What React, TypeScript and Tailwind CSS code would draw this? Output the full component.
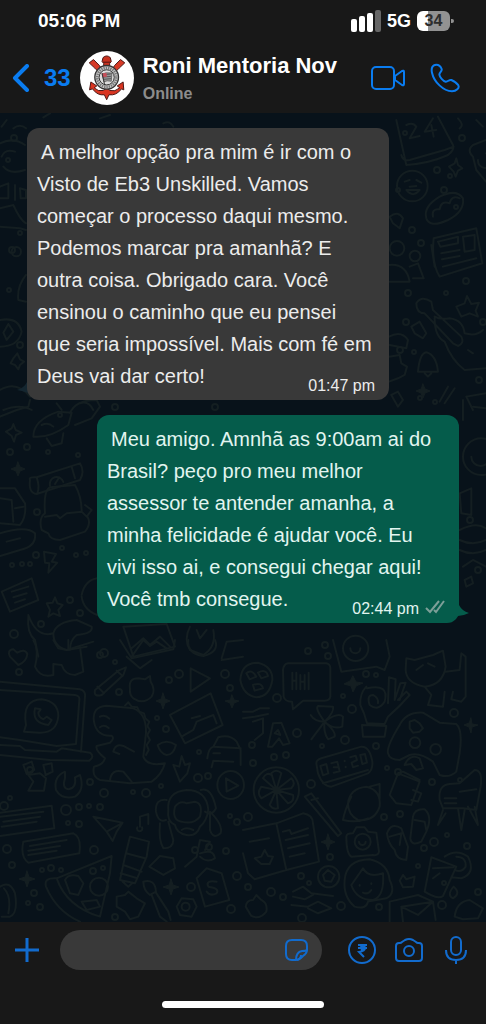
import React from "react";

const BLUE = "#0a7cf0";

type Message = {
  id: number;
  text: string;
  time: string;
  sent: boolean;
};

const messages: Message[] = [
  {
    id: 1,
    text: "A melhor opção pra mim é ir com o Visto de Eb3 Unskilled. Vamos começar o processo daqui mesmo. Podemos marcar pra amanhã? E outra coisa. Obrigado cara. Você ensinou o caminho que eu pensei que seria impossível. Mais com fé em Deus vai dar certo!",
    time: "01:47 pm",
    sent: false,
  },
  {
    id: 2,
    text: "Meu amigo. Amnhã as 9:00am ai do Brasil? peço pro meu melhor assessor te antender amanha, a minha felicidade é ajudar você. Eu vivi isso ai, e consegui chegar aqui! Você tmb consegue.",
    time: "02:44 pm",
    sent: true,
  },
];

// Each block of doodles is drawn at 3x and placed by its own origin
const doodles = [
  {
    x: 0,
    y: 640,
    paths: [
      // laptop
      "M0 125L240 148Q257 152 255 170L243 335M0 150L225 165Q240 167 238 180L228 312 170 318 60 300 0 292M0 315L60 318 75 330 170 335 185 325 270 338Q285 350 268 362L150 360 0 345",
      "M78 255Q65 180 125 178Q175 185 175 228Q170 280 118 278L72 275ZM105 205Q95 250 145 255L155 240 140 230 130 238Q115 230 115 218L122 208Z",
      // dinosaur
      "M335 287Q290 290 282 245Q275 200 320 197L400 205Q440 220 438 280L430 350Q440 380 495 370Q485 405 455 425L390 430 300 420Q275 410 282 380Q310 375 315 355Q285 330 290 318L330 308Q345 295 335 287ZM340 335Q345 310 370 318L402 335M340 335L358 342M330 420Q335 385 370 395L395 425M300 230Q315 222 328 236M300 262Q312 252 326 264",
      "M375 197L385 187 395 200 412 202 418 215 432 220 436 235 448 245 442 258 450 270 442 285 450 300 440 315 446 330 438 345",
      // pencil, apple, play
      "M285 150L355 92 378 82 370 105 305 165Q280 172 285 150ZM350 92L368 108M292 140L312 160",
      "M390 145Q385 115 415 115L435 118 450 108 452 125Q468 150 455 170Q430 195 400 175Q388 165 390 145Z",
      "M572 85L630 115 572 155Z",
      // picture
      "M510 225L632 160 668 255 555 310ZM545 290L580 270 590 245 640 225 650 250M575 235L600 228",
      // car
      "M622 355Q625 325 640 320L655 292Q690 282 710 305L722 330V375M640 320L722 325M635 382L640 362 700 365M640 340H660",
      "M652 435a40 42 0 1 0 80 0a40 42 0 1 0 -80 0M678 415L715 437 680 455Z",
      // monkey
      "M505 510Q500 455 560 450Q620 450 625 510Q620 545 600 560Q590 590 560 585Q530 580 525 555Q500 545 505 510ZM560 490Q540 480 525 500Q515 540 545 545Q580 555 600 530Q610 490 585 485ZM500 480Q465 475 468 515Q475 550 498 540M602 450Q635 440 648 505Q635 530 615 515M480 550Q475 600 490 625Q520 625 520 600L505 545M630 515Q670 555 662 580Q640 600 630 570ZM545 570Q560 560 580 570",
      // books
      "M0 518L155 497 163 565 0 588M0 530L130 515M10 545L120 530M5 560L110 545M70 605L220 580Q245 590 238 640L85 668Q60 650 70 605ZM90 618L200 600M85 632L180 618M85 645L170 632",
      // clip, bow
      "M195 395Q160 410 168 450Q185 480 225 470Q255 450 240 405L225 412Q230 445 205 448Q185 445 195 415Z",
      "M70 375L95 365 103 390 80 402ZM130 375L155 370 158 395 137 405ZM85 405L100 425 85 452H132L138 415 120 400Z",
      // paper plane and note
      "M280 530L368 548 350 575 338 603 320 575ZM320 575L365 550M420 560V530L445 522V552M412 562a8 8 0 1 0 14 0",
      // battery, pizza
      "M390 590L447 605 440 650 405 730 360 720 375 650ZM378 640L435 655M370 675L425 695M362 700L412 715M368 725L385 740 398 728",
      "M170 715L335 648 330 700 300 830Q200 800 170 715ZM170 715Q130 712 138 740Q170 815 240 845M195 720Q205 700 235 708L250 730 235 765 210 760ZM270 740a27 27 0 1 0 54 0a27 27 0 1 0 -54 0M245 785L290 780 300 800 260 810Z",
      "M448 680L480 648 520 655 525 685 490 705Z",
      "M350 770L375 765 385 755 410 775 435 790 415 830 390 838 375 815 350 800Z",
      "M430 725Q465 715 468 755L450 765Q430 750 430 725ZM455 765L480 830 500 845M468 758L505 815 512 840",
      "M545 775L580 778 590 800 575 830 540 825 530 800ZM545 800a12 12 0 1 0 24 0a12 12 0 1 0 -24 0",
      "M590 715L620 685 665 700 688 780 615 800ZM650 725Q615 720 625 740Q660 745 650 760Q630 770 620 755",
      "M545 348L555 375 570 370 562 400 540 425 520 375 538 380ZM473 315Q500 295 528 315Q520 345 500 345Q480 340 473 315Z",
      "M0 740Q30 720 45 760Q55 820 30 830H5M12 745Q35 770 25 820",
      "M555 680L590 650 600 600M600 600L630 605 615 630M600 640Q640 625 645 655Q620 670 600 650",
      "M30 50Q20 30 40 28L52 38Q75 25 82 42Q80 65 55 75Z",
      "M100 0Q118 30 105 80Q120 115 160 105V72L185 75Q195 105 225 105L250 95 240 20M160 0L175 25 200 30 280 5M205 30V0",
      "M360 0L395 55 520 28 525 0M395 50L430 0 450 18 470 5 500 25M380 50L420 85 455 60M565 0Q560 40 610 48Q660 35 645 0M665 55L680 5 729 0M665 60L729 50",
    ],
  },
  {
    x: 243,
    y: 640,
    paths: [
      "M-8 120Q-5 68 45 68Q90 80 88 120Q80 170 40 172Q0 165 -8 120ZM10 100Q25 85 40 110L20 118ZM45 98Q70 85 75 108L55 115ZM30 135Q55 125 60 145L35 152Z",
      // chat balloon
      "M135 70H250Q262 72 262 85V170Q260 182 245 182H180L150 208 147 185Q125 185 122 170L120 90Q122 72 135 70ZM148 98V148M160 98V148M148 122H160M172 105V148M185 105V148M175 125H185M197 98V148",
      // camera and flag
      "M270 0L295 95 400 80 425 90 440 50 430 0M300 25a38 38 0 1 0 76 0a38 38 0 1 0 -76 0M322 25a15 15 0 1 0 30 0",
      // ok hand
      "M370 140Q350 160 352 195Q365 220 372 250L425 252 435 230Q470 200 500 165L490 155 465 180M372 145Q440 130 425 185Q405 215 380 195Q370 165 390 165Q408 175 405 190M435 190L438 112 458 118 455 180 472 130 488 128 470 180M357 255L430 258 425 290H360Z",
      // cat
      "M490 55L515 60 570 45 600 32 608 80Q600 135 545 140Q490 130 488 90ZM608 95L650 90 655 40 668 50V170L655 185 625 178 630 155M545 140L565 165 555 195 600 200 605 155M520 90L540 75M555 70L575 80",
      // clover
      "M245 245Q215 205 225 198L270 200Q275 215 245 245Q285 215 300 230L298 260Q270 270 245 245Q280 275 275 290L255 298Q240 275 245 245Q215 245 203 225M245 245L205 298",
      "M75 320L90 250 115 248 140 310 120 315 108 295 88 320ZM95 280L105 270 112 285Z",
      "M0 215H30L50 205H78M0 235L35 230 75 222M30 245L60 235V280L35 300",
      // gamepad
      "M435 340Q430 320 470 255Q490 215 540 218L590 248 640 252Q660 270 650 340L640 395Q620 415 590 405L570 365Q530 335 500 345L470 360Q440 360 435 340ZM500 245L515 240 530 250 540 265 530 275 510 278 500 265ZM500 308a16 16 0 1 0 32 0a16 16 0 1 0 -32 0M562 328a16 16 0 1 0 32 0a16 16 0 1 0 -32 0M485 375Q500 340 530 355L540 385 520 390 505 372Z",
      // clock
      "M220 370Q220 360 235 355L355 320Q380 318 388 365Q390 390 375 400L265 440Q240 440 225 400ZM240 430L375 390M232 378L250 372 256 400 240 406ZM265 370L283 365 290 394 272 398M272 382H284M305 362V364M308 380V382M322 352L338 347 342 360 326 368 330 382 345 377M352 345L366 342 372 368 358 372Z",
      // flower wheel
      "M32 450a68 68 0 1 0 136 0a68 68 0 1 0 -136 0M100 450L85 400Q100 385 115 400L100 450L145 415Q160 430 145 445L100 450L150 465Q155 485 135 490L100 450L105 505Q90 510 80 495L100 450L55 475Q40 460 55 440L100 450L60 415Q70 395 85 405",
      // ring planet
      "M315 490Q320 445 370 440Q415 450 410 500Q395 545 345 540Q315 525 315 490ZM325 470Q305 510 300 540Q340 550 375 535M380 440L410 432 410 475",
      // mug
      "M465 400L530 425 505 495 460 490 440 465ZM465 400L480 395 530 420M510 450L535 460 525 485 505 480",
      // chair
      "M590 480Q585 435 620 432L650 430 695 390Q720 390 713 440L700 510 660 505H600ZM605 475H640M605 490H640M650 455L700 448M600 510L585 555 608 520M645 505L655 570 665 510M675 500L705 555 695 500",
      // open book
      "M0 570L100 550 180 520Q210 525 210 550L228 665 130 690 35 718 15 700 0 640M100 550L130 690M20 605L78 595M35 655L55 650 65 630 75 648 90 650 80 672H55ZM120 575L140 570 145 582 195 565M128 600L195 585M135 625L200 610M140 650L185 640",
      "M185 470L205 460 295 580 285 588ZM205 480L225 475",
      // camera
      "M310 590Q310 580 330 580L340 562H365L375 575 400 578 408 635Q405 648 390 645L325 650Q310 640 310 590ZM335 605a24 24 0 1 0 48 0a24 24 0 1 0 -48 0M348 605a10 10 0 1 0 20 0",
      // slippers
      "M432 580Q445 545 475 565L495 620 490 660Q460 660 455 630Q435 610 432 580ZM440 590L475 580 470 615M510 530Q515 505 545 508Q570 530 550 575L535 605Q505 620 502 595ZM515 540L545 545 550 570",
      // girl
      "M305 720Q310 660 380 658Q435 670 440 720Q460 760 430 775L375 785Q370 810 335 800Q300 770 305 720ZM325 735Q350 700 360 685Q375 715 420 700Q425 770 390 780Q340 780 325 735M350 735V737M385 730V732M360 758Q375 765 385 750",
      "M225 710a32 32 0 1 0 64 0a32 32 0 1 0 -64 0M240 705L255 690 275 705 265 725 245 722Z",
      // drink
      "M565 652L640 680 600 768Q585 780 545 755ZM570 685L632 682M605 650Q640 625 675 650Q700 700 655 715L625 712M640 650Q670 650 668 680Q655 700 635 690M570 715L590 700",
      "M150 755L180 740 205 760 270 768M150 770L185 778 210 765M145 795L195 800 225 785 265 805 225 820 195 805",
      "M440 845V785L525 765 570 785 578 840M475 800L570 785M480 845L475 800 525 825 570 785",
      "M635 830Q640 785 680 780L720 805 705 835 660 838Z",
      "M8 800Q10 780 30 780L40 765 55 780Q75 790 70 815Q50 840 25 828Z",
      "M480 705L490 718 515 710 510 740 480 742 470 722ZM632 740Q655 760 630 775Q610 765 632 740Z",
    ],
  },
  {
    x: 243,
    y: 120,
    paths: [
      // calendar
      "M460 0L490 135Q560 130 615 105Q635 90 630 75L585 -10M475 105Q480 125 500 120L605 90 632 80M490 15Q510 5 520 20L500 55 530 48M570 -5L545 35 580 30M565 15L572 50",
      // smiley
      "M462 198a46 46 0 1 0 92 0a46 46 0 1 0 -92 0M485 185L500 180M520 180L535 188M490 210Q510 235 530 210ZM500 200L520 198",
      // hot dog
      "M550 295Q540 260 590 230Q640 205 660 235Q665 275 615 300Q560 325 550 295ZM570 290Q565 265 590 268Q595 240 620 250Q625 225 650 235",
      // newspaper
      "M572 355L700 325 718 430 590 470Q565 430 572 355ZM585 365L645 350V370L592 380ZM660 350L695 345V390L665 395ZM595 400L650 390M597 418L650 408M600 440L700 415M565 375L575 440",
      // guitar
      "M520 550Q535 525 565 545L570 570 655 650Q665 670 645 678L630 670 545 580Q520 580 520 550ZM575 590Q590 600 620 595Q660 600 665 640Q700 650 720 630M575 595Q575 650 605 665Q625 720 665 750L729 745M675 690L690 700",
      "M640 560L665 550 672 528 685 552 708 548 698 572 705 590 680 580 655 590Z",
      "M505 620L530 605 550 640 540 655 515 640ZM525 755Q530 700 550 697Q580 705 585 755ZM545 760L555 770 565 760",
      "M440 290Q465 270 480 295L470 325 450 310ZM440 385a22 22 0 1 0 44 0a22 22 0 1 0 -44 0M500 408a16 16 0 1 0 32 0a16 16 0 1 0 -32 0M438 435Q490 430 500 485H440M500 440L525 430 542 475H510",
      "M438 650Q475 630 495 660L490 685 440 675M438 710L470 705 475 730 492 740 485 765 465 775 438 785M590 845L615 800M605 850L635 805M670 830L729 820M670 830L690 870M445 825L465 815 480 840 465 860Z",
      "M690 110Q670 90 690 75L729 60M690 110L700 150 729 185M705 120a22 22 0 1 0 24 -20",
      "M618 140L635 130 640 115 645 135 658 145 645 152 638 170 632 155Z",
      "M645 -5Q665 15 650 25M700 0L720 20",
    ],
  },
  {
    x: 243,
    y: 400,
    paths: [
      "M660 170a55 55 0 1 0 110 0a55 55 0 1 0 -110 0M685 170a28 28 0 1 0 56 0",
      "M650 280L685 265V345L655 340ZM650 390Q700 365 729 385M650 420Q690 440 729 420M650 450Q690 470 729 450M660 500L690 480 729 500M665 540L685 530 690 550 670 560Z",
      "M660 60V0M690 20L729 25",
    ],
  },
  {
    x: 0,
    y: 400,
    paths: [
      // rocket
      "M100 110Q100 60 175 35L215 38 205 75Q150 115 100 110ZM125 75Q145 65 160 80M210 40Q225 0 290 0L300 20 275 55 225 75M140 115L155 138 185 130 190 100",
      "M0 50L50 30 85 20 90 0M18 95L35 85 40 72 47 90 65 98 48 105 42 125 35 108Z",
      // camera roll
      "M90 240Q85 230 110 232L240 190Q255 215 240 240L110 282Q85 280 90 240ZM110 232Q120 260 112 280M150 258a20 20 0 1 1 40 -12M165 252L178 232M215 200L225 235",
      // backpack
      "M135 340Q130 270 150 262L225 255Q245 290 245 335L260 350 275 330 255 315M135 340Q115 355 125 390L145 400Q150 420 180 420L255 395Q275 370 262 350M135 350L170 345 180 355 200 340 245 335",
      "M0 265H45L75 310Q80 350 60 375L0 370M0 295L35 300 40 365M45 325L70 320M0 400Q80 375 105 400Q110 440 60 450L0 468M20 425L60 415",
      "M5 575L95 535 115 600 30 635ZM35 575L85 560M40 592L80 580M45 608L75 598",
      "M132 455L168 462 155 485 172 488 145 518 148 490 135 488Z",
      "M140 610L158 608 165 592 172 610 188 615 175 630 180 648 160 640 145 650 150 630Z",
      "M245 585Q255 540 292 535M245 590Q250 630 292 645",
      "M85 650Q80 700 105 720L115 770M85 645Q110 715 160 700Q170 665 230 660L275 680Q280 700 230 705Q210 720 210 750M160 700Q160 740 200 750L260 740",
      "M370 680L500 672 525 740 400 770ZM395 745L430 715 450 735 480 710 510 740M570 680Q550 720 570 750L610 765Q650 740 640 690M590 690L600 715 620 690",
    ],
  },
  {
    x: 0,
    y: 120,
    paths: [
      "M0 70Q40 50 75 75M5 110Q15 85 45 95M10 140Q30 165 75 150M0 200L25 190V235H0M45 195V240M60 205L78 210V235H62Z",
      "M0 265L40 255Q60 300 78 310M0 320L60 325 78 330M35 395a14 14 0 1 0 28 0a14 14 0 1 0 -28 0",
      "M78 465Q50 500 55 540L78 545M0 600Q55 590 65 635Q55 680 0 680M25 612L40 635 20 660 10 638Z",
      "M40 715L52 700 60 718 72 725 60 735 55 748 45 735 32 730ZM0 810Q50 780 90 830M10 870Q60 850 95 870M5 20L20 0M40 25Q60 10 78 25",
      "M130 -8L150 -20M300 -5L330 -15M170 850L185 870M240 850Q265 840 280 870",
      "M490 10Q510 0 520 20",
    ],
  },
];

// small confetti between the drawings
const confetti: number[][] = [
  [14, 138, 3], [8, 160, 2], [20, 233, 2], [12, 250, 3], [9, 290, 2], [20, 345, 3], [115, 407, 3], [60, 415, 2], [215, 407, 3],
  [27, 447, 3], [48, 452, 2], [78, 455, 2], [10, 452, 3], [37, 512, 3], [36, 555, 3], [62, 548, 2], [76, 555, 2], [12, 565, 2], [70, 600, 3],
  [14, 634, 4], [41, 624, 3], [80, 613, 3], [86, 553, 2], [22, 564, 2], [30, 564, 2], [405, 133, 2], [462, 138, 3], [437, 170, 3],
  [450, 176, 2], [444, 190, 3], [398, 190, 2], [456, 207, 2], [412, 230, 3], [421, 243, 3], [408, 293, 3], [466, 281, 3], [446, 293, 2],
  [406, 322, 3], [483, 322, 3], [414, 352, 2], [400, 350, 3], [479, 380, 3], [420, 398, 2], [435, 402, 2], [470, 520, 3], [478, 570, 3],
  [100, 655, 3], [115, 662, 2], [19, 672, 3], [104, 653, 4], [119, 692, 3], [179, 674, 4], [169, 680, 3], [225, 674, 4], [230, 688, 3],
  [166, 729, 3], [157, 718, 2], [199, 752, 2], [198, 778, 4], [208, 776, 3], [161, 786, 2], [104, 793, 4], [90, 782, 3], [146, 793, 4],
  [133, 792, 2], [66, 810, 5], [79, 807, 3], [89, 806, 2], [100, 807, 3], [68, 823, 2], [79, 824, 3], [10, 798, 2], [4, 806, 4], [94, 850, 4],
  [7, 849, 4], [12, 865, 3], [42, 870, 2], [51, 868, 3], [61, 870, 2], [34, 893, 3], [28, 903, 2], [40, 907, 3], [191, 887, 4], [226, 851, 3],
  [237, 876, 4], [231, 909, 4], [93, 871, 3], [103, 868, 2], [230, 816, 2], [237, 822, 3], [209, 847, 3], [115, 917, 3], [325, 645, 3],
  [308, 651, 3], [328, 656, 3], [366, 674, 3], [376, 675, 2], [277, 698, 4], [352, 709, 4], [343, 696, 2], [454, 713, 4], [297, 733, 4],
  [252, 745, 3], [286, 755, 3], [376, 746, 3], [322, 746, 2], [345, 740, 4], [274, 757, 3], [253, 763, 3], [387, 768, 2], [398, 772, 3],
  [432, 782, 3], [311, 784, 4], [460, 780, 2], [248, 817, 4], [384, 817, 3], [400, 814, 3], [434, 842, 4], [447, 835, 2], [424, 848, 3],
  [467, 846, 3], [330, 857, 3], [301, 876, 3], [309, 883, 2], [271, 892, 4], [283, 897, 3], [341, 906, 4], [379, 907, 3], [478, 892, 3],
  [442, 905, 4], [248, 887, 3], [302, 918, 4], [444, 883, 2], [418, 866, 2], [30, 770, 3], [195, 850, 3],
];

const Wallpaper: React.FC = () => (
  <svg
    className="absolute inset-0 h-full w-full"
    viewBox="0 113 486 809"
    preserveAspectRatio="xMidYMid slice"
    fill="none"
    stroke="#141e21"
    strokeLinecap="round"
    strokeLinejoin="round"
    aria-hidden="true"
  >
    {doodles.map((block, i) => (
      <g key={i} transform={`translate(${block.x} ${block.y}) scale(0.3333)`} strokeWidth="6">
        {block.paths.map((d) => (
          <path key={d} d={d} />
        ))}
      </g>
    ))}
    {confetti.map(([x, y, r]) => (
      <circle key={`${x}-${y}`} cx={x} cy={y} r={r} strokeWidth="2" />
    ))}
    <g fill="#141e21" strokeWidth="1">
      <path d="M27 871l2 6 6 2-6 2-2 6-2-6-6-2 6-2zM163 693l2 6 5 2-5 2-2 6-2-6-5-2 5-2zM171 879l2 6 6 2-6 2-2 6-2-6-6-2 6-2zM232 695l2 5 5 1-5 2-2 5-2-5-5-2 5-1z" />
      <path d="M353 676l3 6 7 1-7 3-3 6-2-6-7-2 6-3zM471 718l1 6 6 1-6 2-1 6-2-6-5-2 5-2zM328 834l2 6 5 2-5 2-2 6-2-6-5-2 5-2zM423 384l2 5 5 2-5 2-2 5-2-5-5-2 5-2zM18 462l2 5 5 2-5 2-2 5-2-5-5-2 5-2z" />
    </g>
  </svg>
);

const Crest: React.FC = () => (
  <svg viewBox="27 18 164 164" className="size-[54px] shrink-0 rounded-full bg-white" role="img" aria-label="Roni Mentoria Nov">
    <g stroke="#4a1512" strokeWidth="3" strokeLinejoin="round">
      <path d="M55 54L68 44 86 62 94 76 84 82 72 70ZM163 54L150 44 132 62 124 76 134 82 146 70Z" fill="#d63a26" />
      <path d="M97 38Q108 28 119 38L122 50 117 56V68H99V56L94 50Z" fill="#c8321f" />
      <path d="M97 52H119" />
      <path d="M60 112L56 136 65 133Q80 154 101 151L108 166 115 151Q138 154 153 133L160 136 158 112 140 124 148 130Q132 143 118 138L108 130 98 138Q82 142 70 130L78 124Z" fill="#d93420" />
    </g>
    <circle cx="108" cy="98" r="36" fill="#c9c9c9" stroke="#343434" strokeWidth="4" />
    <circle cx="108" cy="98" r="29" fill="none" stroke="#777" strokeWidth="8" strokeDasharray="4 3" />
    <circle cx="108" cy="98" r="23" fill="#dcdcdc" stroke="#333" strokeWidth="3" />
    <path d="M94 88Q104 82 124 85L122 110Q108 106 100 112Z" fill="#999" stroke="#444" strokeWidth="2" />
    <path d="M96 90L120 88M98 97L121 95M99 104L121 102" stroke="#333" strokeWidth="2" />
    <path d="M93 86L107 84 109 96 96 98Z" fill="#c6505a" />
    <path d="M94 85L102 122" stroke="#333" strokeWidth="3" />
  </svg>
);

const StatusBar: React.FC = () => (
  <div className="flex h-[42px] items-center justify-between pr-8 pl-[38px]">
    <span className="text-[19px] font-bold">05:06 PM</span>
    <div className="flex items-center gap-1.5">
      <svg width="30" height="22" viewBox="0 0 30 22" aria-hidden="true">
        <rect x="0" y="9" width="6" height="13" rx="2" fill="#fff" />
        <rect x="8" y="6" width="6" height="16" rx="2" fill="#fff" />
        <rect x="16" y="3" width="6" height="19" rx="2" fill="#fff" />
        <rect x="24" y="0" width="6" height="22" rx="2" fill="#666" />
      </svg>
      <span className="text-lg font-bold">5G</span>
      <div className="flex items-center gap-px">
        <div className="flex h-5 w-[33px] items-center justify-center rounded-md bg-linear-to-r from-white from-34% to-[#929292] to-34% text-base font-bold text-[#2d2d2d]">
          34
        </div>
        <div className="h-1 w-[3px] rounded-r-full bg-[#929292]" />
      </div>
    </div>
  </div>
);

const Header: React.FC = () => (
  <header className="bg-[#181818] text-white">
    <StatusBar />
    <div className="flex h-[71px] items-center pr-[26px] pl-3">
      <button type="button" aria-label="Voltar" className="flex items-center gap-3.5 text-2xl font-bold text-[#0a7cf0]">
        <svg width="18" height="28" viewBox="0 0 18 28" fill="none" stroke={BLUE} strokeWidth="4" strokeLinecap="round" strokeLinejoin="round">
          <path d="M15 2L3 14l12 12" />
        </svg>
        33
      </button>
      <div className="ml-[9px]">
        <Crest />
      </div>
      <div className="ml-[9px] min-w-0 flex-1 pt-1">
        <h1 className="truncate text-[22px] leading-7 font-bold">Roni Mentoria Nov</h1>
        <p className="text-base leading-7 font-bold text-[#8c8c8c]">Online</p>
      </div>
      <div className="flex items-center gap-6">
        <button type="button" aria-label="Chamada de vídeo">
          <svg width="36" height="24" viewBox="0 0 36 24" fill="none" stroke={BLUE} strokeWidth="2" strokeLinejoin="round">
            <rect x="2" y="1" width="22" height="22" rx="4" />
            <path d="M25 10l7-5q2-1 2 1v12q0 2-2 1l-7-5z" />
          </svg>
        </button>
        <button type="button" aria-label="Ligar">
          <svg width="30" height="30" viewBox="561 186 90 90" fill="none" stroke={BLUE} strokeWidth="6" strokeLinejoin="round">
            <path d="M580 191C568 191 564 202 567 215C573 243 601 270 627 271C640 271 650 261 646 253C642 246 632 240 625 237C618 235 615 243 608 242C600 240 590 228 589 221C589 213 598 211 596 204C593 196 588 191 580 191Z" />
          </svg>
        </button>
      </div>
    </div>
  </header>
);

const Bubble: React.FC<{ message: Message }> = ({ message }) => (
  <div
    className={
      message.sent
        ? "relative max-w-[362px] self-end rounded-xl bg-[#055c4b] pt-2 pr-4 pb-0.5 pl-2.5 text-[#e2f5f0]"
        : "relative max-w-[362px] self-start rounded-xl bg-[#393939] pt-2 pr-4 pb-0.5 pl-2.5 text-[#ececec]"
    }
  >
    {message.sent ? (
      <svg className="absolute -right-2.5 bottom-1" width="16" height="14" viewBox="0 0 16 14" aria-hidden="true">
        <path d="M6 0Q9 6 16 8Q10 11 5 11L0 14V0Z" fill="#055c4b" />
      </svg>
    ) : (
      <svg className="absolute bottom-1 -left-2.5 -z-10" width="16" height="14" viewBox="0 0 16 14" aria-hidden="true">
        <path d="M10 0Q7 6 0 8Q6 9 11 11L16 14V0Z" fill="#142630" />
      </svg>
    )}
    <p className="indent-1 text-xl leading-8">
      {message.text}
      {/* floats beside the end of the last line */}
      <span className="float-right mt-3.5 -mr-0.5 flex items-center gap-1.5 indent-0 text-base leading-6">
        <time>{message.time}</time>
        {message.sent && (
          <svg width="20" height="14" viewBox="0 0 20 14" fill="none" stroke="#7d9f98" strokeWidth="2" className="mb-1" aria-label="Entregue">
            <path d="M1 8l4 4L14 1M9 10l2 2L19 1" />
          </svg>
        )}
      </span>
    </p>
  </div>
);

const Composer: React.FC = () => (
  <footer className="bg-[#181818] pt-2 pb-4">
    <div className="flex h-10 items-center pr-4 pl-[15px]">
      <button type="button" aria-label="Anexar">
        <svg width="24" height="24" viewBox="0 0 24 24" stroke="#126bcd" strokeWidth="3">
          <path d="M12 0v24M0 12h24" />
        </svg>
      </button>
      <div className="ml-[21px] flex h-10 min-w-0 flex-1 items-center rounded-full bg-[#393939] pr-3.5 pl-4">
        <input type="text" aria-label="Mensagem" className="h-full min-w-0 flex-1 bg-transparent text-xl text-white outline-none" />
        <button type="button" aria-label="Figurinhas">
          <svg width="24" height="24" viewBox="0 0 24 24" fill="none" stroke="#126bcd" strokeWidth="2" strokeLinejoin="round">
            <path d="M23 12V8q0-6-6-6H8Q2 2 2 8v8q0 6 6 6h4q3 0 7-4 4-3 4-6z" />
            <path d="M12 22q0-8 6-9 4 0 5-1M13 22q4-1 4-5" />
          </svg>
        </button>
      </div>
      <div className="ml-[26px] flex items-center gap-[19px]">
        <button type="button" aria-label="Pagamento">
          <svg width="28" height="28" viewBox="0 0 28 28" fill="none" stroke="#126bcd" strokeWidth="2">
            <circle cx="14" cy="14" r="13" />
            <path d="M10 9h9M10 12h9M11 9q6 0 6 3t-6 4l5 5" />
            <path d="M12 9h4v6h-3z" fill="#126bcd" stroke="none" />
          </svg>
        </button>
        <button type="button" aria-label="Câmera">
          <svg width="28" height="26" viewBox="0 0 28 26" fill="none" stroke="#126bcd" strokeWidth="2" strokeLinejoin="round">
            <path d="M1 9q0-3 3-3h1q1 0 2-1l3-2q2-1 4-1t4 1l3 2q1 1 2 1h1q3 0 3 3v12q0 3-3 3H4q-3 0-3-3z" />
            <circle cx="14" cy="14" r="5" />
          </svg>
        </button>
        <button type="button" aria-label="Gravar áudio">
          <svg width="28" height="28" viewBox="0 0 28 28" fill="none" stroke="#126bcd" strokeWidth="2">
            <rect x="9" y="1" width="10" height="18" rx="5" />
            <path d="M4 14q0 10 10 10t10-10M14 24v4" />
          </svg>
        </button>
      </div>
    </div>
    <div className="mx-auto mt-[31px] h-[7px] w-1/3 rounded-full bg-white" />
  </footer>
);

const App: React.FC = () => {
  return (
    <div className="flex min-h-screen flex-col bg-[#181818] font-['Liberation_Sans',Arial,sans-serif]">
      <Header />
      <main className="relative isolate flex flex-1 flex-col bg-[#08121a]">
        <div className="absolute inset-0 -z-20 overflow-hidden">
          <Wallpaper />
        </div>
        <div className="flex flex-col gap-[15px] px-[27px] py-[15px]">
          {messages.map((message) => (
            <Bubble key={message.id} message={message} />
          ))}
        </div>
      </main>
      <Composer />
    </div>
  );
};

export default App;
